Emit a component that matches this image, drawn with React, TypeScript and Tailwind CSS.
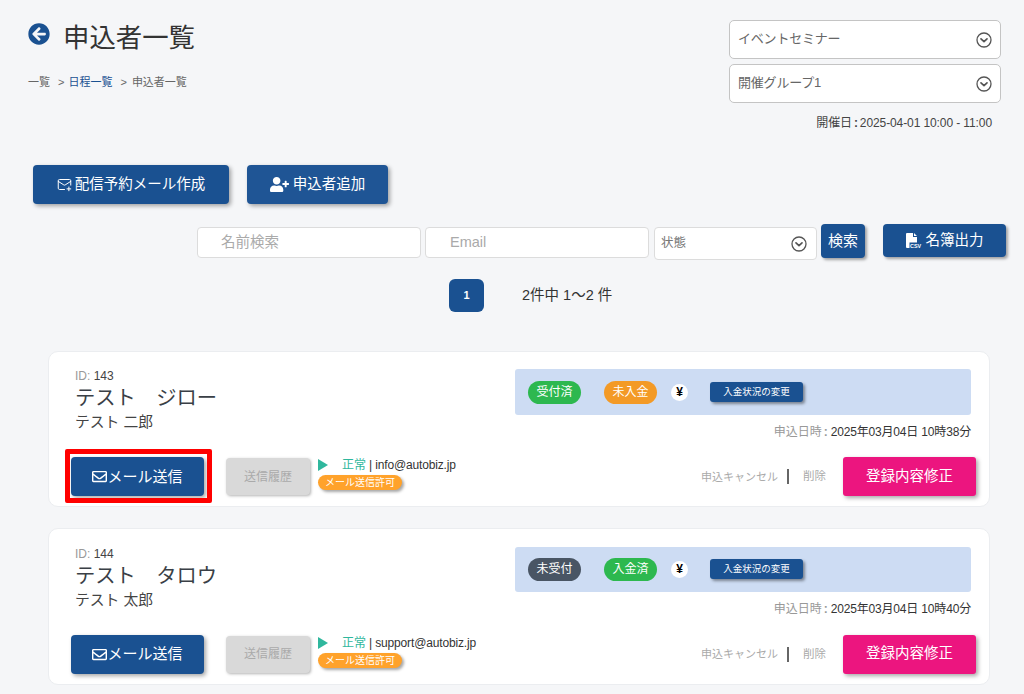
import React from "react";
import { FaArrowCircleLeft, FaRegEnvelope, FaUserPlus } from "react-icons/fa";
import { MailPlus } from "lucide-react";

function ChevronCircle() {
  return (
    <svg width="16" height="16" viewBox="0 0 16 16" fill="none" stroke="#555" className="shrink-0">
      <circle cx="8" cy="8" r="7" strokeWidth="1.3" />
      <path d="M5 6.8 L8 9.6 L11 6.8" strokeWidth="1.7" strokeLinecap="round" strokeLinejoin="round" />
    </svg>
  );
}

function CsvIcon() {
  return (
    <svg width="16" height="15" viewBox="0 0 16 15" className="shrink-0">
      <path d="M0 1 Q0 0 1 0 H7 V4 H11 V15 H1 Q0 15 0 14 Z M8 0 L11 3 H8 Z" fill="#fff" />
      <rect x="3.5" y="9.5" width="12.5" height="5.5" fill="#1a5191" />
      <text x="4" y="14.5" fontSize="5.4" fontWeight="700" fill="#fff" fontFamily="'Liberation Sans', sans-serif">CSV</text>
    </svg>
  );
}

function TopSelect({ label }: { label: string }) {
  return (
    <div className="flex h-[39px] w-[272px] items-center justify-between rounded-[5px] border border-[#c4c4c4] bg-white pl-[8px] pr-[8px] text-[13px] tracking-[-0.2px] text-[#666]">
      <span className="-mt-[2px]">{label}</span>
      <ChevronCircle />
    </div>
  );
}

const pillColors: Record<string, string> = {
  green: "bg-[#2db84f]",
  orange: "bg-[#f39a26]",
  slate: "bg-[#495564]",
};

function Pill({ label, color }: { label: string; color: string }) {
  return (
    <span className={`flex h-[23px] w-[53px] items-center justify-center rounded-full text-[12px] text-white ${pillColors[color]}`}>
      {label}
    </span>
  );
}

function Card({
  id,
  kana,
  name,
  status,
  statusColor,
  pay,
  payColor,
  date,
  email,
  framed,
}: {
  id: number;
  kana: string;
  name: string;
  status: string;
  statusColor: string;
  pay: string;
  payColor: string;
  date: string;
  email: string;
  framed?: boolean;
}) {
  return (
    <div className="flex h-[156.5px] w-[942px] flex-col rounded-[10px] border border-[#ebedf0] bg-white pl-[22px] pr-[13px] pt-[17.5px]">
      <div className="flex justify-between">
        <div className="pl-[4px]">
          <div className="h-[14px] text-[12px] leading-[14px] text-[#999]">
            ID: <span className="text-[#444]">{id}</span>
          </div>
          <div className="mt-[1px] text-[20.3px] leading-[28px] text-[#3a3f46]">{kana}</div>
          <div className="text-[14.8px] leading-[20px] text-[#444]">{name}</div>
        </div>
        <div className="mr-[5px] w-[456px]">
          <div className="flex h-[45.6px] items-center rounded-[3px] bg-[#cddcf3] pl-[13px]">
            <Pill label={status} color={statusColor} />
            <span className="ml-[23px]">
              <Pill label={pay} color={payColor} />
            </span>
            <span className="ml-[14px] flex h-[17px] w-[17px] items-center justify-center rounded-full bg-white text-[12px] font-bold text-black">
              ¥
            </span>
            <span className="ml-[22px] flex h-[20px] w-[93px] items-center justify-center rounded-[3px] bg-[#1a5191] text-[9.5px] text-white shadow-[2px_2px_3px_rgba(0,0,0,0.4)]">
              入金状況の変更
            </span>
          </div>
          <div className="mt-[8px] text-right text-[12px] leading-[18px] tracking-[-0.17px] text-[#333]">
            <span className="tracking-normal text-[#999]">申込日時</span>
            <span className="mx-[2px] font-bold text-[#999]">:</span>
            <span className="ml-[1px]">{date}</span>
          </div>
        </div>
      </div>
      <div className="mt-auto mb-[10px] flex items-center">
        <div className="relative">
          <button className="flex h-[39px] w-[133px] items-center justify-center rounded-[4px] bg-[#1a5191] text-[15px] text-white shadow-[2px_2px_4px_rgba(0,0,0,0.35)]">
            <FaRegEnvelope className="text-[15px]" />
            メール送信
          </button>
          {framed && <div className="absolute -bottom-[7px] -left-[6px] -right-[8px] -top-[8px] rounded-[2px] border-[5px] border-[#ff0000]" />}
        </div>
        <button className="ml-[22px] flex h-[37px] w-[84px] items-center justify-center rounded-[4px] bg-[#d9d9d9] text-[12px] text-[#aaa] shadow-[1px_1px_3px_rgba(0,0,0,0.3)]">
          送信履歴
        </button>
        <div className="ml-[8px] -mt-[5px] flex flex-col">
          <div className="flex h-[14px] items-center text-[12px] text-[#333]">
            <svg width="10" height="12" viewBox="0 0 10 12" className="shrink-0">
              <path d="M0 0 L10 6 L0 12 Z" fill="#2fb79d" />
            </svg>
            <span className="ml-[14px] text-[#2fb79d]">正常</span>
            <span className="ml-[3px] tracking-[-0.15px]">| {email}</span>
          </div>
          <span className="mt-[3px] flex h-[15px] w-[84px] items-center justify-center rounded-full bg-[#ffa22b] text-[10px] text-white shadow-[2px_2px_3px_rgba(0,0,0,0.35)]">
            メール送信許可
          </span>
        </div>
        <div className="ml-auto flex items-center text-[11px] text-[#aaa]">
          <span>申込キャンセル</span>
          <span className="ml-[9px] h-[15px] w-[2px] bg-[#666]" />
          <span className="ml-[14px] text-[11.5px]">削除</span>
          <button className="ml-[17px] flex h-[39px] w-[133px] items-center justify-center rounded-[3px] bg-[#ec157f] text-[14.5px] text-white shadow-[2px_2px_4px_rgba(0,0,0,0.35)]">
            登録内容修正
          </button>
        </div>
      </div>
    </div>
  );
}

export default function App() {
  return (
    <div
      className="h-[694px] w-[1024px] overflow-hidden bg-[#f5f6f8] text-[#333]"
      style={{ fontFamily: '"Liberation Sans", "Noto Sans CJK JP", sans-serif' }}
    >
      <div className="flex justify-between pl-[28px] pr-[23px] pt-[20px]">
        <div>
          <div className="flex h-[34px] items-center">
            <FaArrowCircleLeft className="-mt-[7px] text-[22px] text-[#1a5191]" />
            <h1 className="ml-[13px] mt-[2px] text-[26.4px] leading-[34px] text-[#333]">申込者一覧</h1>
          </div>
          <div className="mt-[20px] flex h-[16px] items-center text-[11px] text-[#666]">
            <span>一覧</span>
            <span className="ml-[8px]">&gt;</span>
            <span className="ml-[4px] text-[#1a5191]">日程一覧</span>
            <span className="ml-[8px]">&gt;</span>
            <span className="ml-[5px]">申込者一覧</span>
          </div>
        </div>
        <div className="flex flex-col items-end gap-[5px]">
          <TopSelect label="イベントセミナー" />
          <TopSelect label="開催グループ1" />
          <div className="mr-[9px] mt-[7px] text-[12px] leading-[16px] tracking-[-0.1px] text-[#444]">
            開催日<span className="mx-[2px] font-bold">:</span>2025-04-01 10:00 - 11:00
          </div>
        </div>
      </div>

      <div className="mt-[34px] flex gap-[18px] pl-[33px]">
        <button className="flex h-[39px] w-[196px] items-center justify-center gap-[3px] rounded-[4px] bg-[#1a5191] text-[14.5px] text-white shadow-[2px_2px_4px_rgba(0,0,0,0.35)]">
          <MailPlus size={15} strokeWidth={1.6} />
          配信予約メール作成
        </button>
        <button className="flex h-[39px] w-[141px] items-center justify-center gap-[4px] rounded-[4px] bg-[#1f5595] text-[14.5px] text-white shadow-[2px_2px_4px_rgba(0,0,0,0.35)]">
          <FaUserPlus className="text-[19px]" />
          申込者追加
        </button>
      </div>

      <div className="mt-[20px] flex items-start pl-[197px]">
        <div className="mt-[3px] flex h-[31px] w-[224px] items-center rounded-[4px] border border-[#dcdcdc] bg-white pl-[23px] text-[14.5px] text-[#aaa]">
          名前検索
        </div>
        <div className="ml-[4px] mt-[3px] flex h-[31px] w-[224px] items-center rounded-[4px] border border-[#dcdcdc] bg-white pl-[24px] text-[14.5px] text-[#aaa]">
          Email
        </div>
        <div className="ml-[5px] mt-[3px] flex h-[33px] w-[163px] items-center justify-between rounded-[4px] border border-[#dcdcdc] bg-white pl-[6px] pr-[9px] text-[12.5px] text-[#777]">
          <span>状態</span>
          <ChevronCircle />
        </div>
        <button className="ml-[4px] flex h-[34px] w-[44px] items-center justify-center rounded-[4px] bg-[#1a5191] text-[15px] text-white shadow-[2px_2px_3px_rgba(0,0,0,0.35)]">
          検索
        </button>
        <button className="ml-[18px] flex h-[33px] w-[123px] items-center justify-center gap-[4px] rounded-[4px] bg-[#1a5191] text-[14.5px] text-white shadow-[2px_2px_3px_rgba(0,0,0,0.35)]">
          <CsvIcon />
          名簿出力
        </button>
      </div>

      <div className="mt-[19px] flex items-center pl-[449px]">
        <span className="flex h-[33px] w-[35px] items-center justify-center rounded-[6px] bg-[#1a5191] text-[11px] font-bold text-white">1</span>
        <span className="ml-[38px] text-[14.5px] text-[#333]">2件中 1〜2 件</span>
      </div>

      <div className="mt-[38.8px] flex flex-col gap-[20.9px] pl-[48px]">
        <Card
          id={143}
          kana="テスト　ジロー"
          name="テスト 二郎"
          status="受付済"
          statusColor="green"
          pay="未入金"
          payColor="orange"
          date="2025年03月04日 10時38分"
          email="info@autobiz.jp"
          framed
        />
        <Card
          id={144}
          kana="テスト　タロウ"
          name="テスト 太郎"
          status="未受付"
          statusColor="slate"
          pay="入金済"
          payColor="green"
          date="2025年03月04日 10時40分"
          email="support@autobiz.jp"
        />
      </div>
    </div>
  );
}
